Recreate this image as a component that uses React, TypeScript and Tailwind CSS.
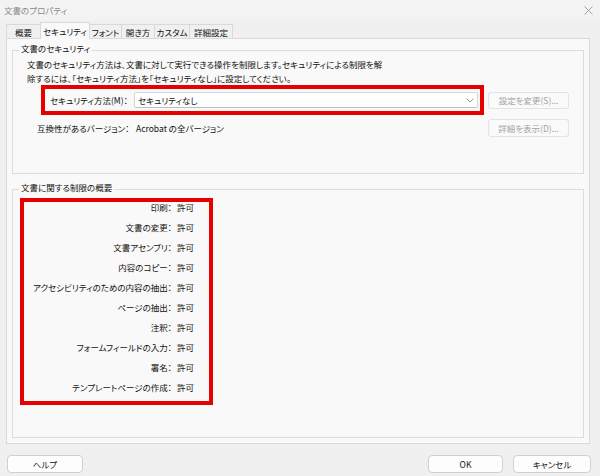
import React from "react";

const rows: [string, string][] = [
  ["印刷：", "許可"],
  ["文書の変更：", "許可"],
  ["文書アセンブリ：", "許可"],
  ["内容のコピー：", "許可"],
  ["アクセシビリティのための内容の抽出：", "許可"],
  ["ページの抽出：", "許可"],
  ["注釈：", "許可"],
  ["フォームフィールドの入力：", "許可"],
  ["署名：", "許可"],
  ["テンプレートページの作成：", "許可"],
];

const tabs = [
  { label: "概要", w: "w-[35px]" },
  { label: "セキュリティ", w: "w-[50px]", active: true },
  { label: "フォント", w: "w-[33px]" },
  { label: "開き方", w: "w-[34px]" },
  { label: "カスタム", w: "w-[36px]" },
  { label: "詳細設定", w: "w-[44px]" },
];

export default function App() {
  return (
    <div className="w-[600px] h-[476px] bg-[#f0f0f0] overflow-hidden flex flex-col text-[8.5px] text-[#111] font-['Noto_Sans_CJK_JP','Noto_Sans',sans-serif] [font-feature-settings:'palt']">
      {/* title bar */}
      <div className="h-[20px] bg-[#f3f3f3] flex items-center justify-between pl-[4px] pr-[7px]">
        <span className="text-[#8a8a8a] leading-[10px]">文書のプロパティ</span>
        <svg width="9" height="9" viewBox="0 0 9 9">
          <path d="M0.5 0.5 L8.5 8.5 M8.5 0.5 L0.5 8.5" stroke="#9a9a9a" strokeWidth="0.9" />
        </svg>
      </div>

      {/* tabs */}
      <div className="h-[16px] mt-[2px] pl-[6px] flex items-end relative z-10">
        {tabs.map((t) =>
          t.active ? (
            <div
              key={t.label}
              className={`${t.w} h-[17px] -mb-px -ml-px bg-[#f9f9f9] border border-b-0 border-[#d9d9d9] flex items-center justify-center leading-[10px] whitespace-nowrap`}
            >
              {t.label}
            </div>
          ) : (
            <div
              key={t.label}
              className={`${t.w} h-[14px] -ml-px first:ml-0 bg-[#f0f0f0] border border-b-0 border-[#d9d9d9] flex items-center justify-center leading-[10px] whitespace-nowrap`}
            >
              {t.label}
            </div>
          )
        )}
      </div>

      {/* panel */}
      <div className="mx-[6px] w-[584px] h-[406px] border border-[#d9d9d9] bg-[#f9f9f9] px-[5px] pt-[3px] flex flex-col">
        <fieldset className="border border-[#dcdcdc] h-[132px]">
          <legend className="ml-[6px] px-[2px] pb-[4px] leading-[12px]">文書のセキュリティ</legend>
          <div className="pl-[14px] -mt-[1px]">
            <div className="leading-[14px]">
              <div className="whitespace-nowrap">文書のセキュリティ方法は、文書に対して実行できる操作を制限します。セキュリティによる制限を解</div>
              <div className="whitespace-nowrap">除するには、「セキュリティ方法」を「セキュリティなし」に設定してください。</div>
            </div>
            <div className="flex items-center ml-[14px]">
              <div className="w-[443px] h-[30px] border-[4px] border-[#e60000] flex items-center pl-[5px] pr-[2px]">
                <span className="w-[84px] leading-[10px] whitespace-nowrap">セキュリティ方法(M)：</span>
                <div className="flex-1 h-[16px] bg-white border border-[#d6d6d6] border-b-[#bdbdbd] rounded-[2px] flex items-center justify-between pl-[3px] pr-[3px]">
                  <span className="leading-[10px]">セキュリティなし</span>
                  <svg width="8" height="5" viewBox="0 0 8 5">
                    <path d="M0.5 0.5 L4 4 L7.5 0.5" stroke="#8a8a8a" strokeWidth="0.9" fill="none" />
                  </svg>
                </div>
              </div>
              <div className="ml-[4px] w-[81px] h-[17px] border border-[#e3e3e3] rounded-[3px] bg-[#fafafa] flex items-center justify-center text-[#a3a3a3] leading-[10px] whitespace-nowrap">
                設定を変更(S)...
              </div>
            </div>
            <div className="flex items-center mt-[4px]">
              <span className="w-[109px] pl-[10px] leading-[10px] whitespace-nowrap">互換性があるバージョン：</span>
              <span className="w-[352px] leading-[10px] whitespace-nowrap">Acrobat の全バージョン</span>
              <div className="w-[81px] h-[18px] border border-[#e3e3e3] rounded-[3px] bg-[#fafafa] flex items-center justify-center text-[#a3a3a3] leading-[10px] whitespace-nowrap">
                詳細を表示(D)...
              </div>
            </div>
          </div>
        </fieldset>

        <fieldset className="border border-[#dcdcdc] mt-[7px] h-[257px]">
          <legend className="ml-[6px] px-[2px] pb-[4px] leading-[12px]">文書に関する制限の概要</legend>
          <div className="ml-[7px] w-[193px] border-[4px] border-[#e60000] flex flex-col gap-[10px] pt-0 pb-[9px] mt-[1px]">
            {rows.map(([k, v]) => (
              <div key={k} className="flex h-[10px] items-center leading-[10px]">
                <span className="w-[148px] text-right whitespace-nowrap">{k}</span>
                <span className="ml-[5px]">{v}</span>
              </div>
            ))}
          </div>
        </fieldset>
      </div>

      {/* bottom buttons */}
      <div className="flex items-center mt-[11px] px-[7px]">
        <div className="w-[76px] h-[18px] border border-[#cfcfcf] rounded-[4px] bg-[#fdfdfd] flex items-center justify-center leading-[10px]">
          ヘルプ
        </div>
        <div className="ml-auto w-[75px] h-[18px] border border-[#cfcfcf] rounded-[4px] bg-[#fdfdfd] flex items-center justify-center leading-[10px]">
          OK
        </div>
        <div className="ml-[10px] mr-[2px] w-[78px] h-[18px] border border-[#cfcfcf] rounded-[4px] bg-[#fdfdfd] flex items-center justify-center leading-[10px]">
          キャンセル
        </div>
      </div>
    </div>
  );
}
